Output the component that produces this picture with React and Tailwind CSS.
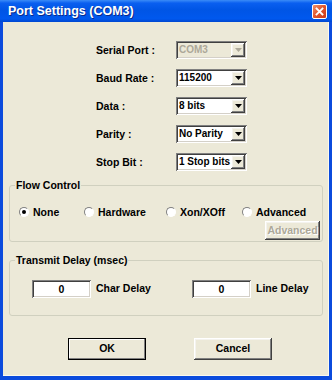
import React from "react";

const sunken =
  "shadow-[inset_1px_1px_0_#808080,inset_-1px_-1px_0_#ffffff,inset_2px_2px_0_#404040,inset_-2px_-2px_0_#d4d0c8]";
const raised =
  "shadow-[inset_-1px_-1px_0_#404040,inset_1px_1px_0_#ffffff,inset_-2px_-2px_0_#808080,inset_2px_2px_0_#f4f3ee]";

function Combo({ value, disabled }) {
  return (
    <div
      className={`flex h-[18px] w-[71px] items-center p-[2px] ${sunken} ${
        disabled ? "bg-[#ECE9D8] text-[#ACA899]" : "bg-white text-black"
      }`}
    >
      <span className="flex-1 overflow-hidden whitespace-nowrap pl-[1px] text-[10px] leading-none">
        {value}
      </span>
      <span
        className={`flex h-[14px] w-[14px] shrink-0 items-center justify-center bg-[#ECE9D8] ${raised}`}
      >
        <svg width="7" height="4" viewBox="0 0 7 4">
          <path d="M0 0h7L3.5 4z" fill={disabled ? "#ACA899" : "#000"} />
        </svg>
      </span>
    </div>
  );
}

function Radio({ label, checked }) {
  return (
    <div className="flex items-center gap-[4px]">
      <span className="flex h-[10px] w-[10px] items-center justify-center rounded-full border border-t-[#808080] border-l-[#808080] border-b-white border-r-white bg-white">
        {checked && <span className="h-[4px] w-[4px] rounded-full bg-black" />}
      </span>
      <span className="leading-none">{label}</span>
    </div>
  );
}

function Delay({ label }) {
  return (
    <div className="flex items-center gap-[5px]">
      <div
        className={`flex h-[18px] w-[59px] items-center justify-center bg-white leading-none ${sunken}`}
      >
        0
      </div>
      <span>{label}</span>
    </div>
  );
}

export default function App() {
  const rows = [
    ["Serial Port :", "COM3", true],
    ["Baud Rate :", "115200"],
    ["Data :", "8 bits"],
    ["Parity :", "No Parity"],
    ["Stop Bit :", "1 Stop bits"],
  ];

  return (
    <div className="flex h-[380px] w-[332px] flex-col bg-[#0B4BDD] font-['Liberation_Sans',Arial,sans-serif] text-[10.5px] font-bold text-black">
      <div className="flex h-[22px] items-center bg-[linear-gradient(180deg,#3b8cf7_0%,#0a5ff0_14%,#0055e5_45%,#0058ee_85%,#0047d0_100%)] pl-[8px] pr-[5px]">
        <span className="text-[12.5px] leading-none text-white [text-shadow:1px_1px_0_#0a2a8a]">
          Port Settings (COM3)
        </span>
        <div className="ml-auto flex h-[15px] w-[15px] items-center justify-center rounded-[2px] border border-white bg-[linear-gradient(135deg,#f0906a_0%,#e0552c_50%,#c8391a_100%)]">
          <svg width="9" height="9" viewBox="0 0 9 9">
            <path
              d="M1.5 1.5l6 6M7.5 1.5l-6 6"
              stroke="#fff"
              strokeWidth="1.8"
              strokeLinecap="square"
            />
          </svg>
        </div>
      </div>

      <div className="mx-[3px] mb-[4px] flex flex-1 flex-col border-b border-r border-[#fbf9ee] bg-[#ECE9D8]">
        <div className="ml-[93px] mt-[19px] grid grid-cols-[80px_72px] items-center gap-y-[10px]">
          {rows.map(([label, value, disabled]) => (
            <React.Fragment key={label}>
              <span className="leading-none">{label}</span>
              <Combo value={value} disabled={disabled} />
            </React.Fragment>
          ))}
        </div>

        <fieldset className="ml-[6px] mr-[5px] mt-[8px] flex flex-col rounded-[3px] border border-[#D0D0BF] px-[2px] pb-[1px]">
          <legend className="ml-[3px] px-[1px] leading-[12px]">Flow Control</legend>
          <div className="ml-[7px] mt-[15px] grid h-[12px] grid-cols-[65px_82px_76px_1fr] items-center">
            <Radio label="None" checked />
            <Radio label="Hardware" />
            <Radio label="Xon/XOff" />
            <Radio label="Advanced" />
          </div>
          <div
            className={`mr-[0px] mt-[3px] flex h-[19px] w-[55px] items-center justify-center self-end bg-[#ECE9D8] text-[#ACA899] [text-shadow:1px_1px_0_#ffffff] ${raised}`}
          >
            Advanced
          </div>
        </fieldset>

        <fieldset className="ml-[6px] mr-[5px] mt-[12px] rounded-[3px] border border-[#D0D0BF] px-[2px] pb-[17px]">
          <legend className="ml-[3px] px-[1px] leading-[12px]">
            Transmit Delay (msec)
          </legend>
          <div className="ml-[20px] mt-[14px] grid grid-cols-[160px_auto]">
            <Delay label="Char Delay" />
            <Delay label="Line Delay" />
          </div>
        </fieldset>

        <div className="ml-[65px] mt-[22px] flex gap-[48px]">
          <div className="flex h-[22px] w-[78px] items-center justify-center border border-black bg-[#ECE9D8] shadow-[inset_-1px_-1px_0_#808080,inset_1px_1px_0_#ffffff]">
            OK
          </div>
          <div
            className={`flex h-[22px] w-[78px] items-center justify-center bg-[#ECE9D8] ${raised}`}
          >
            Cancel
          </div>
        </div>
      </div>
    </div>
  );
}
